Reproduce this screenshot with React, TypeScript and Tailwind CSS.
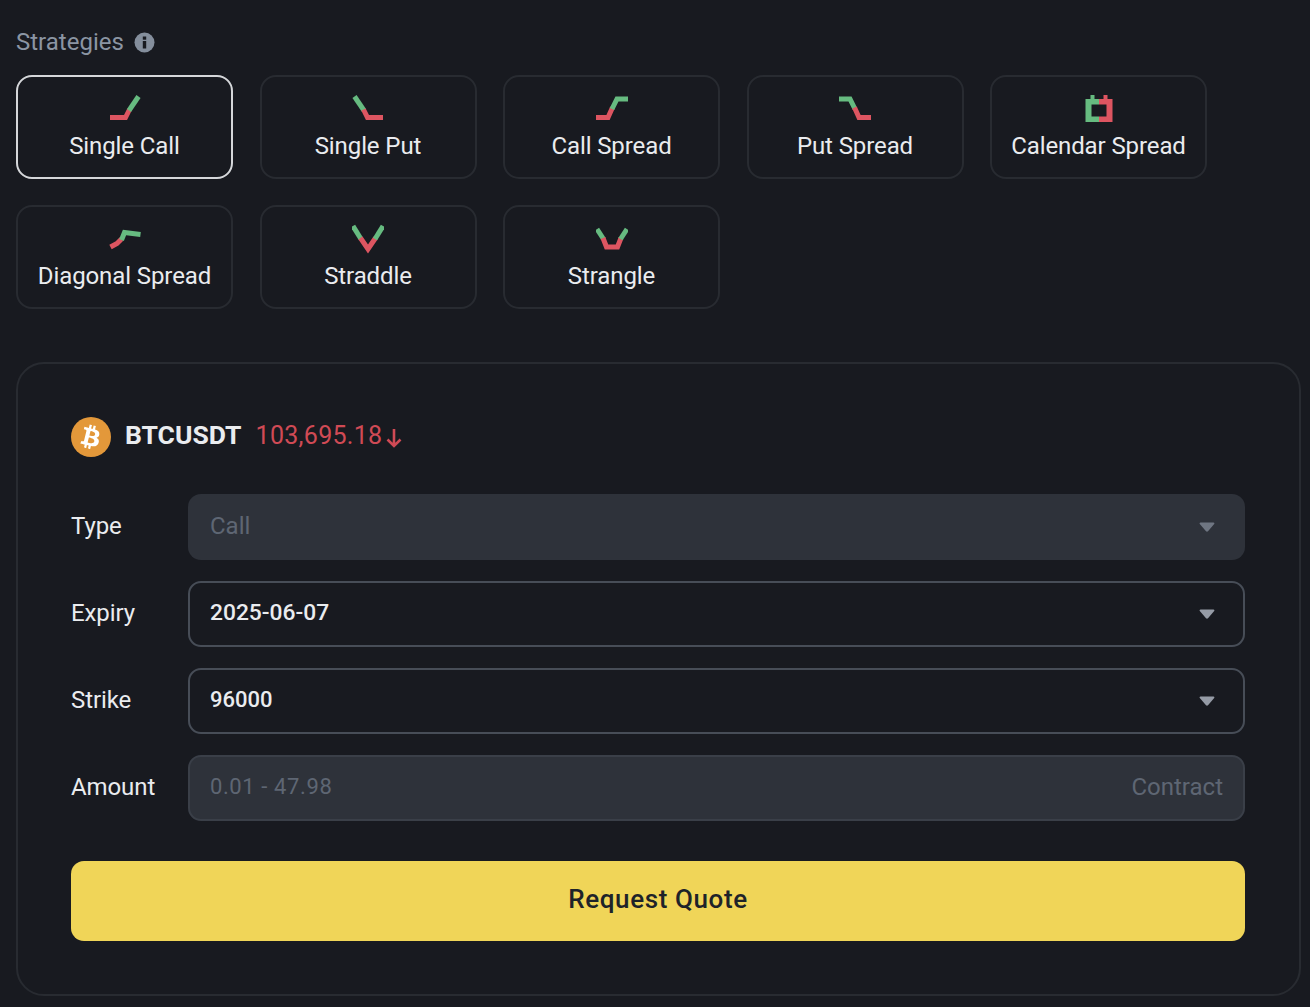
import React from "react";
import { FaBtc } from "react-icons/fa";

const G = "#66bb80";
const R = "#dd5561";

type Seg = { c: string; p: string };
const icons: Record<string, Seg[]> = {
  "Single Call": [
    { c: R, p: "M1 25.5H16.5L20.5 17.5" },
    { c: G, p: "M20 18.5L29.5 4.5" },
  ],
  "Single Put": [
    { c: G, p: "M2.5 4.5L12 18.5" },
    { c: R, p: "M11.5 17.5L15.5 25.5H31" },
  ],
  "Call Spread": [
    { c: R, p: "M0 25.5H12L16.5 15.5" },
    { c: G, p: "M16 17L21 7H32" },
  ],
  "Put Spread": [
    { c: G, p: "M0 7H11L16 17" },
    { c: R, p: "M15.5 15.5L20 25.5H32" },
  ],
  "Diagonal Spread": [
    { c: R, p: "M1.5 25L8 21.5L12.5 17" },
    { c: G, p: "M12.5 18L15.5 10.5L31.5 12.5" },
  ],
  Straddle: [
    { c: G, p: "M1 4L9 17" },
    { c: R, p: "M8.5 16L16 27L23.5 16" },
    { c: G, p: "M23 17L31 4" },
  ],
  Strangle: [
    { c: G, p: "M1 7L7.5 17" },
    { c: R, p: "M7 16L10.5 25H21.5L25 16" },
    { c: G, p: "M24.5 17L31 7" },
  ],
};

function StrategyIcon({ name }: { name: string }) {
  return (
    <svg width="32" height="32" viewBox="0 0 32 32" fill="none" className="shrink-0">
      {name === "Calendar Spread" ? (
        <>
          <path fill={G} d="M2.5 7H7.5V3H11.5V7H16V12.5H8.5V24.5H16V30H2.5Z" />
          <path fill={R} d="M16 7H20.5V3H24.5V7H29.5V30H16V24.5H23.5V12.5H16Z" />
        </>
      ) : (
        icons[name].map((s, i) => (
          <path key={i} d={s.p} stroke={s.c} strokeWidth="5" strokeLinejoin="miter" />
        ))
      )}
    </svg>
  );
}

function Card({ name, active }: { name: string; active?: boolean }) {
  return (
    <div
      className={`h-[103.5px] rounded-[16px] border-2 flex flex-col items-center pt-[15px] ${
        active ? "border-[#d5d7da]" : "border-[#282b31]"
      }`}
    >
      <StrategyIcon name={name} />
      <span className="mt-[6px] text-[24px] leading-[32px] tracking-[-0.1px] text-[#eaecef]">{name}</span>
    </div>
  );
}

function Caret({ color }: { color: string }) {
  return (
    <svg width="16" height="10" viewBox="0 0 16 10" className="shrink-0">
      <path d="M1.5 0.5H14.5C15.3 0.5 15.7 1.4 15.2 2L9 9.2C8.5 9.8 7.5 9.8 7 9.2L0.8 2C0.3 1.4 0.7 0.5 1.5 0.5Z" fill={color} />
    </svg>
  );
}

function Row({ label, children }: { label: string; children: React.ReactNode }) {
  return (
    <div className="flex items-center h-[66px]">
      <div className="w-[117px] shrink-0 text-[24px] leading-[32px] pb-[2px] tracking-[-0.1px] text-[#eaecef]">{label}</div>
      {children}
    </div>
  );
}

export default function App() {
  const first = ["Single Call", "Single Put", "Call Spread", "Put Spread", "Calendar Spread"];
  const second = ["Diagonal Spread", "Straddle", "Strangle"];
  return (
    <div
      className="w-[1310px] h-[1007px] overflow-hidden bg-[#181a20] pl-[16px] pr-[9.5px] pt-[26px]"
      style={{ fontFamily: "Roboto, sans-serif" }}
    >
      <div className="flex items-center gap-[10px] h-[32px] text-[24px] text-[#8b95a3]">
        <span>Strategies</span>
        <svg width="21" height="21" viewBox="0 0 21 21">
          <circle cx="10.5" cy="10.5" r="10" fill="#848e9c" />
          <rect x="8.8" y="9" width="3.4" height="7.5" fill="#181a20" />
          <rect x="8.8" y="4.5" width="3.4" height="3.2" fill="#181a20" />
        </svg>
      </div>

      <div className="mt-[17px] grid grid-cols-[repeat(5,217px)] gap-x-[26.5px] gap-y-[26.5px]">
        {first.map((n, i) => (
          <Card key={n} name={n} active={i === 0} />
        ))}
        {second.map((n) => (
          <Card key={n} name={n} />
        ))}
      </div>

      <div className="mt-[53.5px] h-[634px] rounded-[28px] border-2 border-[#282b31] pl-[53px] pr-[53.5px] pt-[53px]">
        <div className="flex items-center h-[40px]">
          <div className="w-[40px] h-[40px] rounded-full bg-[#e3983a] flex items-center justify-center">
            <FaBtc className="text-white text-[24px] rotate-[14deg]" />
          </div>
          <span className="ml-[14px] text-[26.5px] leading-[36px] pb-[4px] font-bold text-[#eaecef]">BTCUSDT</span>
          <span className="ml-[14px] text-[25px] leading-[36px] pb-[3px] text-[#d04a55] tracking-[0.3px]">103,695.18</span>
          <svg width="16" height="20" viewBox="0 0 16 20" fill="none" className="ml-[4px] mt-[1px]">
            <path d="M8 1V18M1.5 11.5L8 18L14.5 11.5" stroke="#d04a55" strokeWidth="2.6" />
          </svg>
        </div>

        <div className="mt-[37px] flex flex-col gap-[21px]">
          <Row label="Type">
            <div className="flex-1 h-[66px] rounded-[13px] bg-[#2e323a] flex items-center justify-between pl-[22px] pr-[30px]">
              <span className="text-[24px] leading-[32px] pb-[2px] text-[#5e6673]">Call</span>
              <Caret color="#6f7682" />
            </div>
          </Row>
          <Row label="Expiry">
            <div className="flex-1 h-[66px] rounded-[13px] border-2 border-[#474d57] flex items-center justify-between pl-[20px] pr-[28px]">
              <span className="text-[22.8px] leading-[32px] pb-[2px] font-medium text-[#eaecef]">2025-06-07</span>
              <Caret color="#959ba6" />
            </div>
          </Row>
          <Row label="Strike">
            <div className="flex-1 h-[66px] rounded-[13px] border-2 border-[#474d57] flex items-center justify-between pl-[20px] pr-[28px]">
              <span className="text-[22px] leading-[32px] pb-[2px] font-medium text-[#eaecef]">96000</span>
              <Caret color="#959ba6" />
            </div>
          </Row>
          <Row label="Amount">
            <div className="flex-1 h-[66px] rounded-[13px] bg-[#2e323a] border-2 border-[#3a3f48] flex items-center justify-between pl-[20px] pr-[20px]">
              <span className="text-[22px] leading-[32px] pb-[2px] text-[#5e6673] tracking-[0.6px]">0.01 - 47.98</span>
              <span className="text-[24px] leading-[32px] pb-[2px] text-[#5e6673]">Contract</span>
            </div>
          </Row>
        </div>

        <div className="mt-[40px] h-[80px] rounded-[13px] bg-[#f0d558] flex items-center justify-center text-[26px] leading-[36px] pb-[5px]">
          <span className="font-medium text-[#1e2329] tracking-[0.6px]">Request Quote</span>
        </div>
      </div>
    </div>
  );
}
